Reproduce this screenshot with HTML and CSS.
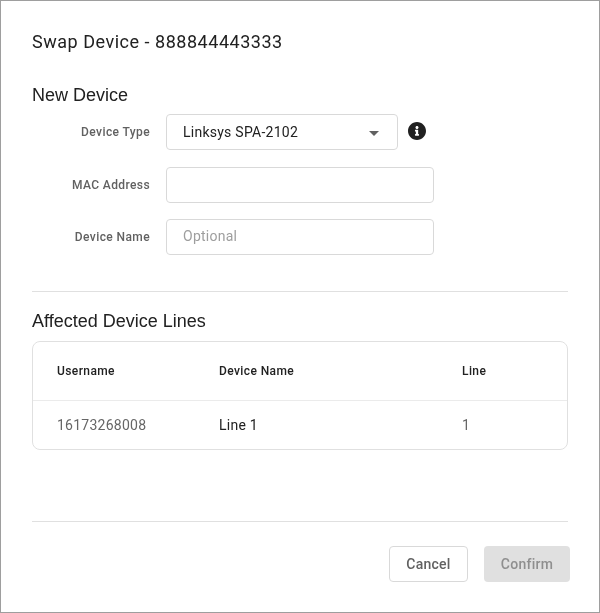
FILE: index.html
```html
<!DOCTYPE html>
<html lang="en">
<head>
<meta charset="utf-8">
<title>Swap Device</title>
<link rel="stylesheet" href="styles.css">
</head>
<body>
<div class="dialog">
  <h1 class="title">Swap Device - 888844443333</h1>
  <h2 class="section new">New Device</h2>
  <div class="form">
    <div class="row type-row">
      <label class="label">Device Type</label>
      <div class="select"><span>Linksys SPA-2102</span><span class="caret"></span></div>
      <svg class="info" width="18" height="18" viewBox="8 8 496 496"><path fill="#212121" d="M256 8C119 8 8 119 8 256s111 248 248 248 248-111 248-248S393 8 256 8zm0 110c23.200 0 42 18.800 42 42s-18.800 42-42 42-42-18.800-42-42 18.800-42 42-42zm56 254c0 6.600-5.400 12-12 12h-88c-6.600 0-12-5.400-12-12v-24c0-6.600 5.400-12 12-12h12v-64h-12c-6.600 0-12-5.400-12-12v-24c0-6.600 5.400-12 12-12h64c6.600 0 12 5.400 12 12v100h12c6.600 0 12 5.400 12 12v24z"/></svg>
    </div>
    <div class="row">
      <label class="label">MAC Address</label>
      <div class="input"></div>
    </div>
    <div class="row">
      <label class="label">Device Name</label>
      <div class="input placeholder">Optional</div>
    </div>
  </div>
  <hr class="rule first">
  <h2 class="section affected">Affected Device Lines</h2>
  <div class="table">
    <div class="tr head"><span class="c1">Username</span><span class="c2">Device Name</span><span class="c3">Line</span></div>
    <div class="tr body-row"><span class="c1 muted">16173268008</span><span class="c2">Line 1</span><span class="c3 muted">1</span></div>
  </div>
  <hr class="rule second">
  <div class="actions">
    <button class="btn cancel">Cancel</button>
    <button class="btn confirm">Confirm</button>
  </div>
</div>
</body>
</html>
```
FILE: styles.css
```css
* { box-sizing: border-box; }
html, body { margin: 0; padding: 0; background: #fff; }
body { font-family: Roboto, "Liberation Sans", sans-serif; color: #212121; }
.dialog {
  width: 600px;
  height: 613px;
  border: 1px solid #9e9e9e;
  padding: 0 31px;
  display: flex;
  flex-direction: column;
  overflow: hidden;
  will-change: transform;
}
.title {
  margin: 30px 0 0;
  font-size: 18px;
  line-height: 22px;
  font-weight: 400;
  letter-spacing: 0.52px;
}
.section {
  margin: 0;
  font-family: "Liberation Sans", Arial, sans-serif;
  font-size: 18px;
  line-height: 22px;
  font-weight: 400;
}
.section.new { margin-top: 31px; }
.form { margin-top: 8px; display: flex; flex-direction: column; gap: 16px; }
.row { display: flex; align-items: center; height: 36px; }
.type-row { margin-bottom: 1px; }
.label {
  width: 118px;
  text-align: right;
  font-size: 12px;
  font-weight: 500;
  letter-spacing: 0.4px;
  color: #616161;
  margin-right: 16px;
}
.select, .input {
  height: 36px;
  border: 1px solid #d9d9d9;
  border-radius: 4px;
  font-size: 14px;
  letter-spacing: 0.25px;
  padding: 0 16px;
  display: flex;
  align-items: center;
}
.select { width: 232px; justify-content: space-between; padding-right: 18px; }
.input { width: 268px; }
.placeholder { color: #9e9e9e; padding-bottom: 2px; }
.caret {
  width: 0;
  height: 0;
  border-left: 5.5px solid transparent;
  border-right: 5.5px solid transparent;
  border-top: 5.5px solid #616161;
  margin-top: 2px;
}
.info { margin-left: 10px; margin-top: -2px; }
.rule { border: 0; border-top: 1px solid #e0e0e0; margin: 0; width: 536px; }
.rule.first { margin-top: 36px; }
.section.affected { margin-top: 18px; }
.table {
  margin-top: 9px;
  width: 536px;
  height: 109px;
  border: 1px solid #e0e0e0;
  border-radius: 8px;
}
.tr { display: flex; align-items: center; padding-left: 24px; }
.head {
  height: 59px;
  border-bottom: 1px solid #ebebeb;
  font-size: 12px;
  font-weight: 500;
  letter-spacing: 0.4px;
}
.body-row { height: 48px; font-size: 14px; letter-spacing: 0.25px; }
.c1 { width: 162px; }
.c2 { width: 243px; }
.muted { color: #666; }
.rule.second { margin-top: 71px; }
.actions { display: flex; justify-content: flex-end; gap: 16px; margin-top: 24px; margin-right: -2px; }
.btn {
  height: 36px;
  border-radius: 4px;
  font-family: inherit;
  font-size: 14px;
  font-weight: 500;
  letter-spacing: 0.25px;
  padding: 0;
}
.cancel { width: 79px; background: #fff; border: 1px solid #d9d9d9; color: #616161; }
.confirm { width: 86px; background: #e0e0e0; border: 0; color: #8f8f8f; }
```
